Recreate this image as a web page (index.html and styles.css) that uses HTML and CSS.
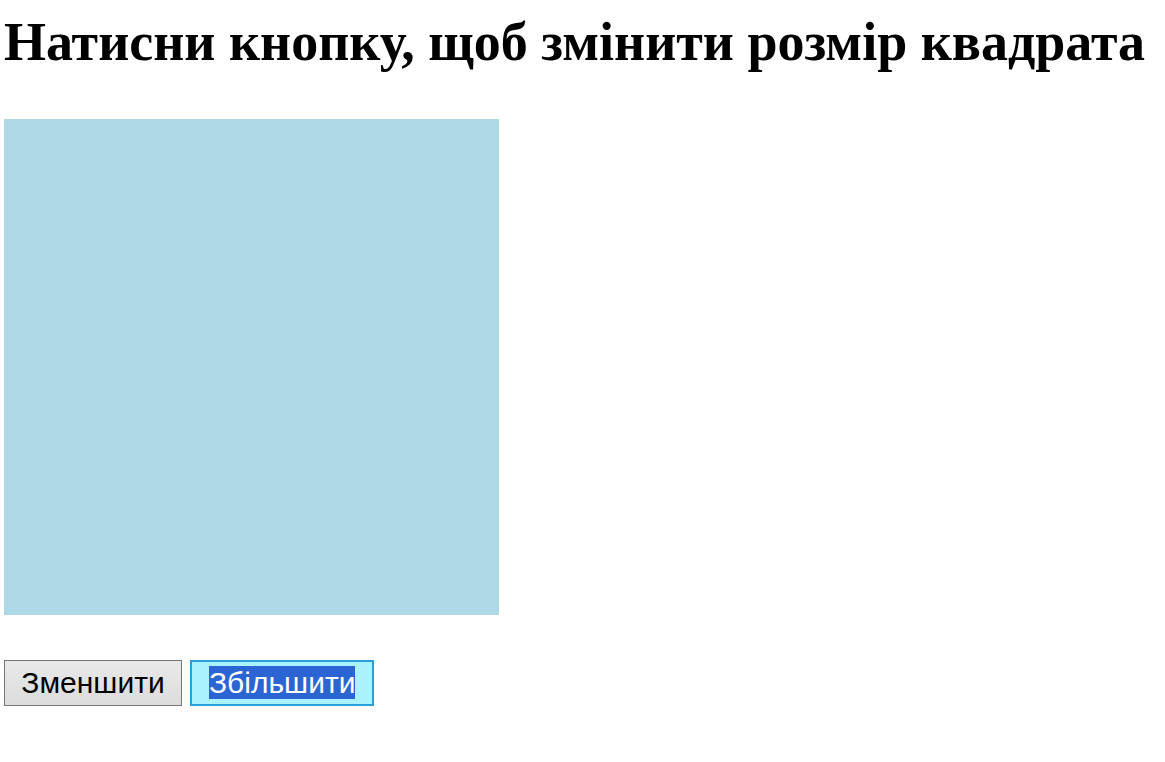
FILE: index.html
```html
<!DOCTYPE html>
<html lang="uk">
<head>
<meta charset="utf-8">
<title>Квадрат</title>
<link rel="stylesheet" href="styles.css">
</head>
<body>
<h1 class="title">Натисни кнопку, щоб змінити розмір квадрата</h1>
<div class="square"></div>
<div class="controls">
  <button class="btn btn-small">Зменшити</button>
  <button class="btn btn-active"><span class="sel">Збільшити</span></button>
</div>
</body>
</html>
```
FILE: styles.css
```css
html, body {
  margin: 0;
  padding: 0;
  background: #fff;
}
body {
  padding: 0 4px;
  font-family: "Liberation Serif", "Times New Roman", serif;
}
.title {
  font-family: "Liberation Serif", "Times New Roman", serif;
  font-weight: bold;
  font-size: 54px;
  line-height: 62px;
  margin: 11px 0 0 0;
  color: #000;
  white-space: nowrap;
}
.square {
  width: 495px;
  height: 496px;
  background: #add8e6;
  margin-top: 46px;
}
.controls {
  display: flex;
  gap: 8px;
  margin-top: 45px;
}
.btn {
  font-family: "Liberation Sans", Arial, sans-serif;
  font-size: 30px;
  height: 46px;
  padding: 0 16px;
  border: 1px solid #767676;
  background: linear-gradient(#e9e9e9, #dcdcdc);
  color: #000;
  border-radius: 0;
  margin: 0;
}
.btn-small {
  width: 178px;
}
.btn-active {
  border: 2px solid #2a9fdb;
  background: #aaf3fe;
  padding: 0 17px;
}
.sel {
  background: #2b64d3;
  color: #fff;
}
```
